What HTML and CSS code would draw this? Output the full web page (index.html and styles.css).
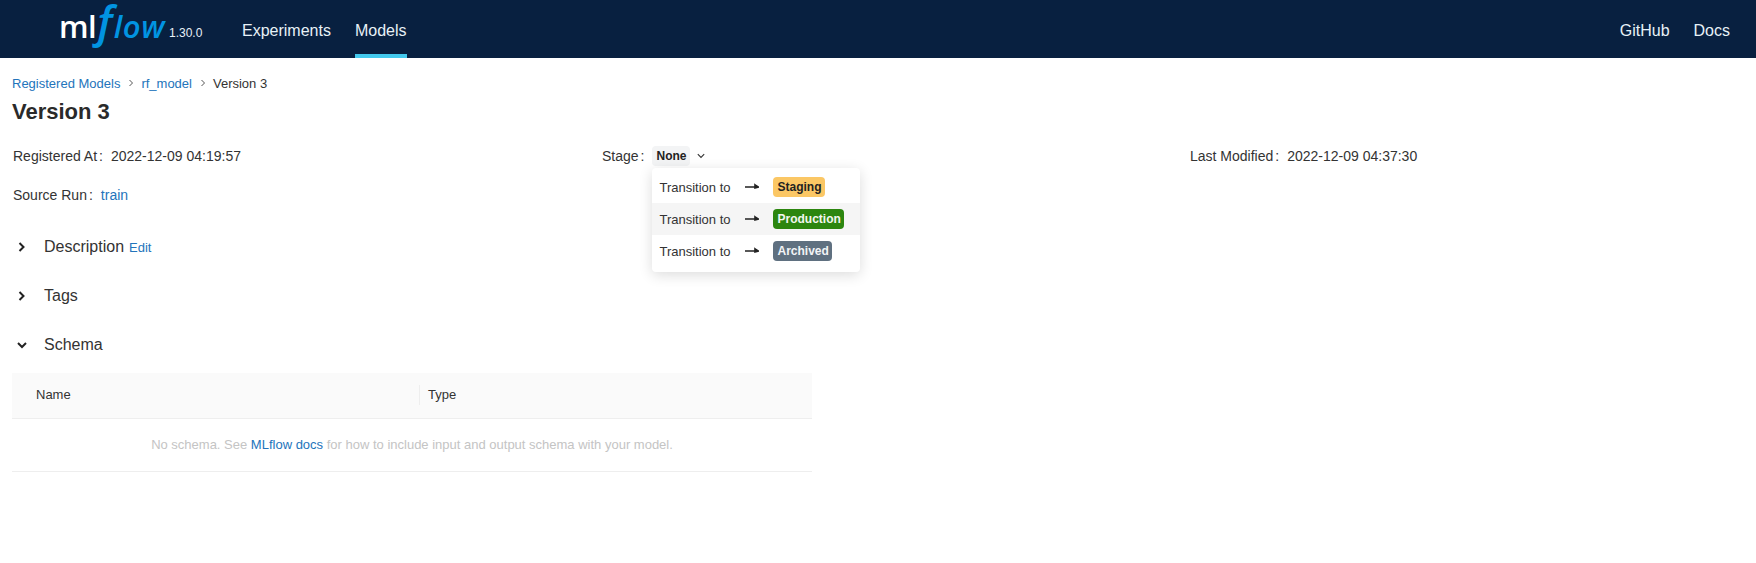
FILE: index.html
```html
<!DOCTYPE html>
<html>
<head>
  <title>MLflow</title>
  <link rel="stylesheet" href="styles.css">
</head>
<body>
  <header class="topbar">
    <div class="logo"><span class="logo-ml">ml</span><span class="logo-flow"><span class="logo-f">f</span>low</span></div>
    <span class="version">1.30.0</span>
    <nav class="nav-main">
      <a class="nav-link" href="#">Experiments</a>
      <a class="nav-link active" href="#">Models</a>
    </nav>
    <nav class="nav-side">
      <a class="nav-link" href="#">GitHub</a>
      <a class="nav-link" href="#">Docs</a>
    </nav>
  </header>

  <main class="content">
    <div class="breadcrumb">
      <a href="#">Registered Models</a>
      <svg class="crumb-sep" width="6" height="8" viewBox="0 0 6 8"><path d="M1.5 1l3 3-3 3" fill="none" stroke="#555" stroke-width="1"/></svg>
      <a href="#">rf_model</a>
      <svg class="crumb-sep" width="6" height="8" viewBox="0 0 6 8"><path d="M1.5 1l3 3-3 3" fill="none" stroke="#555" stroke-width="1"/></svg>
      <span>Version 3</span>
    </div>
    <h1 class="title">Version 3</h1>

    <div class="meta">
      <div class="meta-item"><span class="meta-label">Registered At</span><span class="colon">:</span>2022-12-09 04:19:57</div>
      <div class="meta-item">
        <span class="meta-label">Stage</span><span class="colon">:</span>
        <div class="stage">
          <span class="stage-none">None</span>
          <svg class="stage-caret" width="8" height="6" viewBox="0 0 8 6"><path d="M.8 1.2L4 4.4l3.2-3.2" fill="none" stroke="#333" stroke-width="1.1"/></svg>
          <ul class="menu">
            <li class="menu-item"><span class="menu-text">Transition to</span><svg class="arrow" width="14" height="8" viewBox="0 0 14 8"><path d="M0 4h12M10 1.8L13.4 4 10 5z" fill="#222" stroke="#222" stroke-width="1.6"/></svg><span class="badge staging">Staging</span></li>
            <li class="menu-item hover"><span class="menu-text">Transition to</span><svg class="arrow" width="14" height="8" viewBox="0 0 14 8"><path d="M0 4h12M10 1.8L13.4 4 10 5z" fill="#222" stroke="#222" stroke-width="1.6"/></svg><span class="badge production">Production</span></li>
            <li class="menu-item"><span class="menu-text">Transition to</span><svg class="arrow" width="14" height="8" viewBox="0 0 14 8"><path d="M0 4h12M10 1.8L13.4 4 10 5z" fill="#222" stroke="#222" stroke-width="1.6"/></svg><span class="badge archived">Archived</span></li>
          </ul>
        </div>
      </div>
      <div class="meta-item"><span class="meta-label">Last Modified</span><span class="colon">:</span>2022-12-09 04:37:30</div>
      <div class="meta-item"><span class="meta-label">Source Run</span><span class="colon">:</span><a href="#">train</a></div>
    </div>

    <div class="section">
      <svg class="chevron" width="10" height="12" viewBox="0 0 10 12"><path d="M2.5 2l4 4-4 4" fill="none" stroke="#222" stroke-width="2"/></svg>
      <span class="section-name">Description</span><a class="section-edit" href="#">Edit</a>
    </div>
    <div class="section">
      <svg class="chevron" width="10" height="12" viewBox="0 0 10 12"><path d="M2.5 2l4 4-4 4" fill="none" stroke="#222" stroke-width="2"/></svg>
      <span class="section-name">Tags</span>
    </div>
    <div class="section">
      <svg class="chevron" width="10" height="12" viewBox="0 0 10 12"><path d="M1 4l4 4 4-4" fill="none" stroke="#222" stroke-width="2"/></svg>
      <span class="section-name">Schema</span>
    </div>

    <div class="schema">
      <div class="schema-head">
        <div class="schema-col first">Name</div>
        <div class="schema-col">Type</div>
      </div>
      <div class="schema-empty">No schema. See <a href="#">MLflow docs</a> for how to include input and output schema with your model.</div>
    </div>
  </main>
</body>
</html>
```

FILE: styles.css
```css
* {
  box-sizing: border-box;
}

body {
  margin: 0;
  font: 14px "Liberation Sans", Arial, sans-serif;
  color: #333;
  background: #fff;
}

a {
  color: #2374bb;
  text-decoration: none;
}

.topbar {
  height: 58px;
  background: #082040;
  display: flex;
  align-items: stretch;
  padding-left: 59px;
  color: #e7f1f7;
}

.logo {
  display: flex;
  align-items: baseline;
  width: 110px;
}

.logo-ml {
  font: 600 31px/52px "Open Sans", sans-serif;
  color: #fff;
  letter-spacing: -0.5px;
}

.logo-flow {
  font: italic 600 31px/52px "Open Sans", sans-serif;
  color: #0194e2;
  margin-left: 1px;
  letter-spacing: 0.5px;
}

.logo-f {
  font-size: 44px;
  line-height: 0;
  margin-right: 1px;
}

.version {
  font-size: 12px;
  align-self: center;
  margin-top: 7px;
  width: 73px;
}

.nav-main {
  display: flex;
  gap: 24px;
}

.nav-side {
  display: flex;
  gap: 24px;
  margin-left: auto;
  padding-right: 26px;
}

.nav-link {
  color: #e7f1f7;
  font-size: 16px;
  height: 58px;
  line-height: 62px;
}

.nav-link.active {
  border-bottom: 4px solid #43c9ed;
}

.content {
  padding: 0 12px;
}

.breadcrumb {
  display: flex;
  align-items: center;
  font-size: 13px;
  height: 18px;
  margin-top: 16px;
  color: #333;
}

.crumb-sep {
  margin: 0 7px 0 8px;
}

.title {
  font-size: 22px;
  font-weight: bold;
  line-height: 26px;
  margin: 7px 0 0;
  color: #2a2a2a;
}

.meta {
  display: grid;
  grid-template-columns: 589px 588px 1fr;
  margin-top: 20px;
  padding-left: 1px;
  row-gap: 16px;
}

.meta-item {
  display: flex;
  align-items: center;
  height: 22px;
  color: #333;
}

.meta-item:nth-child(4) {
  margin-top: 1px;
}

.meta-label {
  color: #333;
}

.colon {
  margin: 0 8px 0 2px;
}

.stage {
  position: relative;
  display: flex;
  align-items: center;
}

.stage-none {
  background: #f3f4f5;
  border-radius: 4px;
  font-size: 12px;
  font-weight: bold;
  width: 38px;
  height: 20px;
  line-height: 20px;
  text-align: center;
  color: #222;
}

.stage-caret {
  margin-left: 7px;
}

.menu {
  position: absolute;
  left: 0;
  top: 22px;
  width: 208px;
  margin: 0;
  padding: 3px 0 5px;
  list-style: none;
  background: #fff;
  border-radius: 4px;
  box-shadow: 0 3px 14px rgba(0, 0, 0, 0.14);
  z-index: 2;
}

.menu-item {
  display: flex;
  align-items: center;
  height: 32px;
  padding-left: 7px;
  font-size: 13px;
  color: #333;
}

.menu-item.hover {
  background: #f5f5f5;
}

.menu-text {
  width: 86px;
}

.arrow {
  margin-right: 14px;
}

.badge {
  font-size: 12px;
  font-weight: bold;
  height: 20px;
  line-height: 20px;
  padding: 0 3.5px 0 4px;
  border-radius: 4px;
}

.staging {
  background: #fbc765;
  color: #222;
}

.production {
  background: #2c860f;
  color: #f3f7f0;
}

.archived {
  background: #5f7080;
  color: #f2f4f6;
}

.section {
  display: flex;
  align-items: center;
  height: 24px;
  margin-top: 25px;
  padding-left: 5px;
  font-size: 16px;
  color: #333;
}

.meta + .section {
  margin-top: 29px;
}

.chevron {
  margin-right: 17px;
}

.section-name {
  margin-right: 5px;
}

.section-edit {
  font-size: 13px;
}

.schema {
  width: 800px;
  margin-top: 16px;
  font-size: 13px;
}

.schema-head {
  display: flex;
  align-items: center;
  height: 46px;
  padding-bottom: 1px;
  background: #fafafa;
  border-bottom: 1px solid #eee;
}

.schema-col {
  padding-left: 24px;
  height: 20px;
  line-height: 20px;
  color: #333;
}

.schema-col.first {
  width: 407px;
}

.schema-col + .schema-col {
  padding-left: 8px;
  border-left: 1px solid #eee;
}

.schema-empty {
  height: 53px;
  line-height: 52px;
  text-align: center;
  color: #c4c4c4;
  border-bottom: 1px solid #eee;
}
```
